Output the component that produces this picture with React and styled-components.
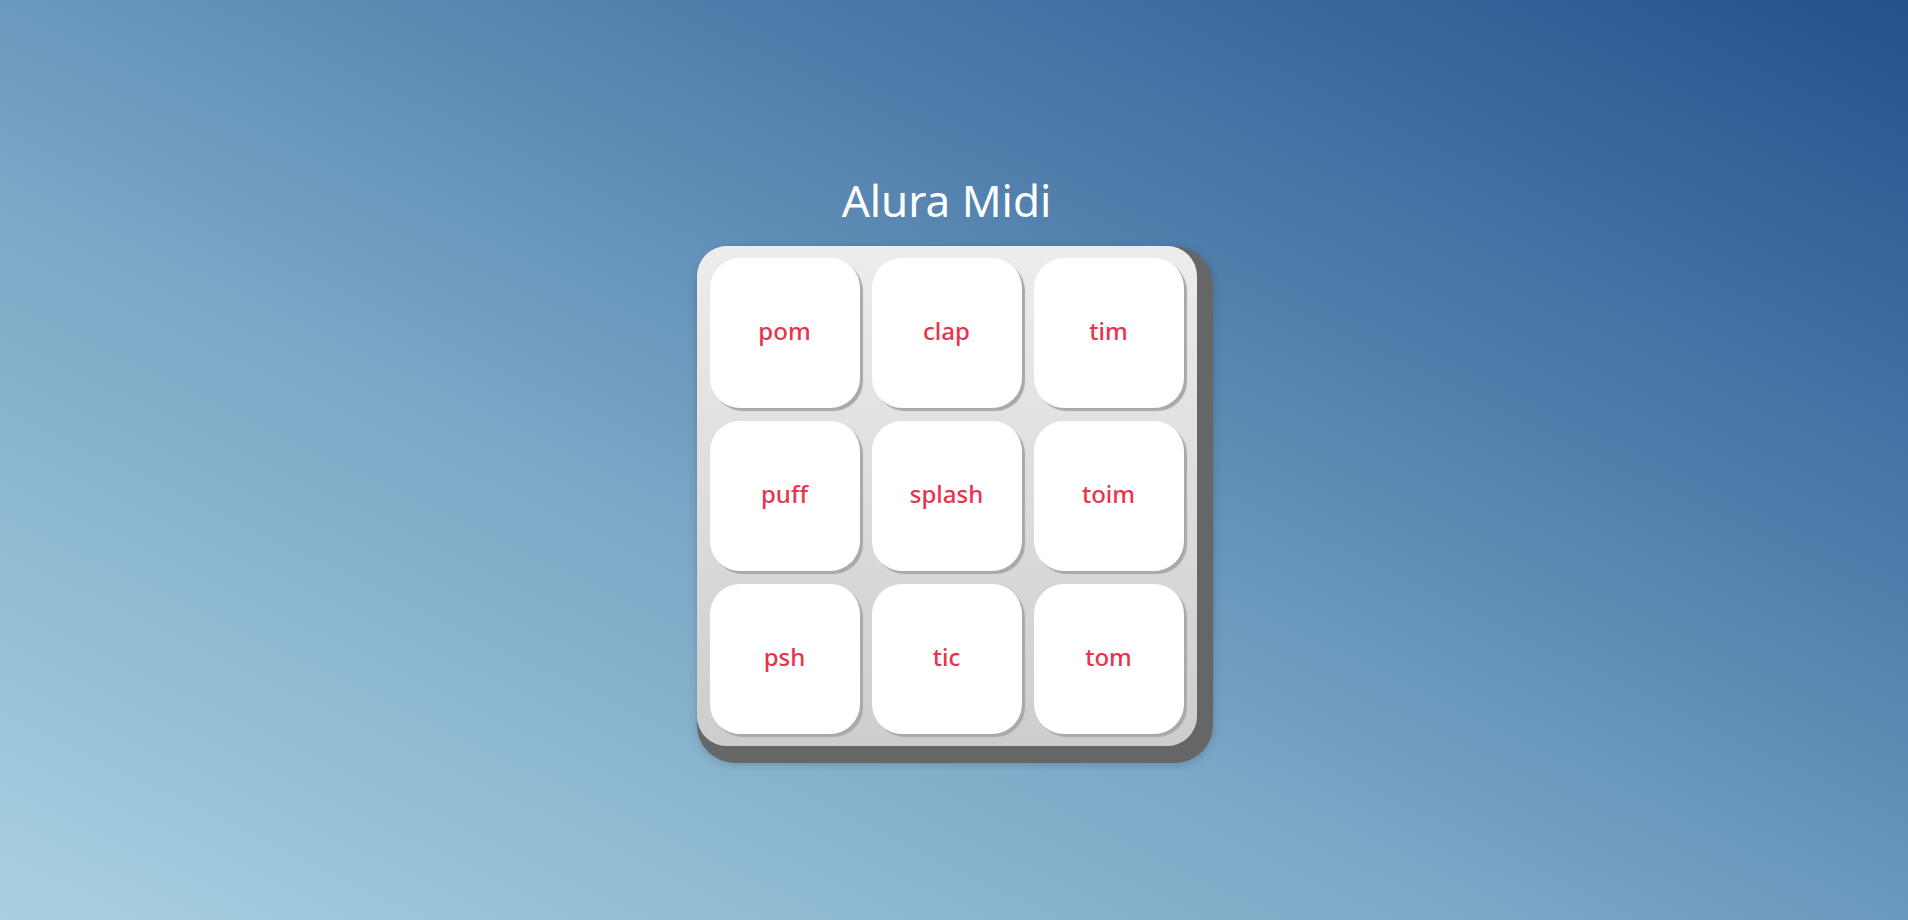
import React from "react";
import styled, { createGlobalStyle } from "styled-components";

const GlobalStyle = createGlobalStyle`
  * {
    box-sizing: border-box;
  }
  body {
    margin: 0;
    font-family: "Noto Sans", "Open Sans", sans-serif;
  }
`;

const sounds = ["pom", "clap", "tim", "puff", "splash", "toim", "psh", "tic", "tom"];

const App = () => {
  return (
    <Page>
      <GlobalStyle />
      <Title>Alura Midi</Title>
      <Keyboard>
        {sounds.map((sound) => (
          <Key key={sound}>{sound}</Key>
        ))}
      </Keyboard>
    </Page>
  );
};

const Page = styled.main`
  min-height: 100vh;
  padding: 0 15px 0 0;
  display: flex;
  flex-direction: column;
  align-items: center;
  justify-content: center;
  background: linear-gradient(to top right, #a9d0e1 0%, #7aa7c6 40%, #4a78a8 72%, #23528b 100%);
`;

const Title = styled.h1`
  margin: 0 0 20px;
  font-size: 44px;
  font-weight: 400;
  color: #fff;
  line-height: 1.2;
`;

const Keyboard = styled.div`
  width: 500px;
  height: 500px;
  padding: 12px 13px;
  display: grid;
  grid-template-columns: repeat(3, 150px);
  grid-template-rows: repeat(3, 150px);
  gap: 13px 12px;
  border-radius: 30px;
  background: linear-gradient(#ededed, #cdcdcd);
  box-shadow: 8px 9px 0 8px #666, 8px 10px 10px 8px rgba(0, 0, 0, 0.2);
`;

const Key = styled.button`
  width: 150px;
  height: 150px;
  padding: 0 0 5px;
  border: none;
  border-radius: 30px;
  background: #fff;
  box-shadow: 3px 3px 1px #a9a9a9;
  color: #e8334c;
  font-family: "Noto Sans", "Open Sans", sans-serif;
  font-size: 24px;
  font-weight: 500;
  cursor: pointer;
`;

export default App;
